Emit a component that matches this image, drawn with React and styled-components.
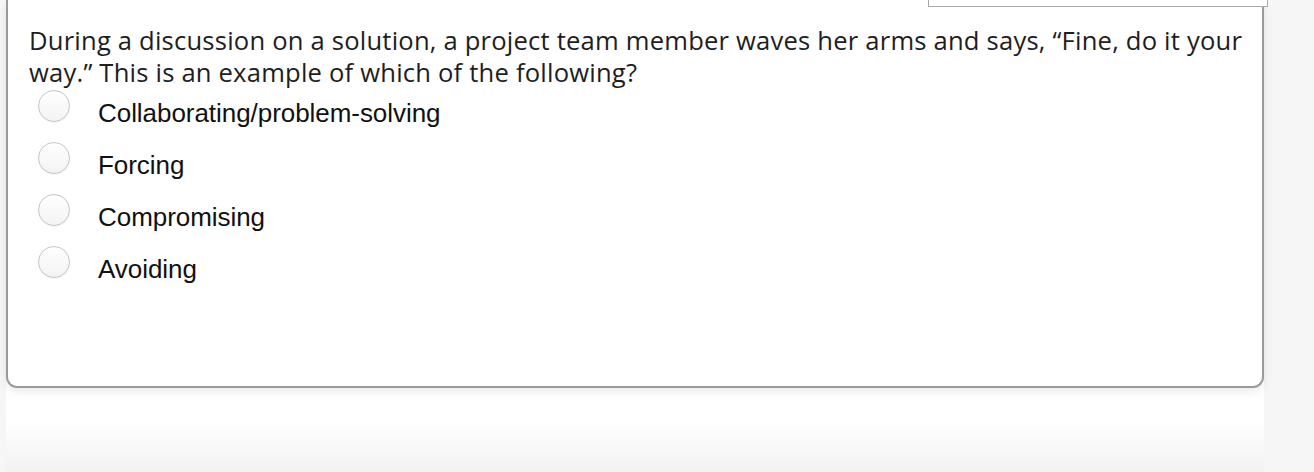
import React from "react";
import styled, { createGlobalStyle } from "styled-components";

const Global = createGlobalStyle`
  html, body { margin: 0; padding: 0; }
  body { background: #f6f6f6; width: 1314px; height: 472px; overflow: hidden; }
`;

const Column = styled.div`
  margin-left: 6px;
  width: 1258px;
  height: 472px;
  background: linear-gradient(to bottom, #ffffff 0px, #ffffff 420px, #f2f2f2 472px);
  position: relative;
`;

const Card = styled.div`
  position: relative;
  box-sizing: border-box;
  height: 388px;
  background: #fff;
  border: 2px solid #9a9a9a;
  border-top: none;
  border-radius: 0 0 11px 11px;
  box-shadow: 0 4px 10px rgba(0, 0, 0, 0.08);
  padding: 25px 0 0 21px;
`;

const TopBox = styled.div`
  position: absolute;
  top: -2px;
  left: 920px;
  width: 340px;
  height: 9px;
  box-sizing: border-box;
  border: 1px solid #aaa;
  border-top: none;
  background: #fff;
`;

const Question = styled.div`
  font-family: "Open Sans", sans-serif;
  font-size: 25.6px;
  line-height: 32px;
  letter-spacing: 0.2px;
  color: #1e1e1e;
  width: 1230px;
`;

const Options = styled.div`
  display: flex;
  flex-direction: column;
`;

const Option = styled.label`
  display: flex;
  align-items: flex-start;
  height: 52px;
  padding-left: 9px;
`;

const Radio = styled.span`
  width: 32px;
  height: 32px;
  margin-top: 1px;
  box-sizing: border-box;
  border-radius: 50%;
  border: 1px solid #c6c6c6;
  background: linear-gradient(to bottom, #ffffff, #f3f3f3);
  box-shadow: 0 1px 1px rgba(0, 0, 0, 0.05);
  flex: none;
`;

const OptionText = styled.span`
  font-family: "Liberation Sans", Arial, sans-serif;
  font-size: 26px;
  line-height: 30px;
  color: #111;
  margin-left: 28px;
  margin-top: 9px;
  letter-spacing: -0.05px;
`;

const options = [
  "Collaborating/problem-solving",
  "Forcing",
  "Compromising",
  "Avoiding",
];

export default function App() {
  return (
    <>
      <Global />
      <Column>
        <Card>
          <TopBox />
          <Question>
            During a discussion on a solution, a project team member waves her arms and says, “Fine, do it your way.” This is an example of which of the following?
          </Question>
          <Options>
            {options.map((o) => (
              <Option key={o}>
                <Radio />
                <OptionText>{o}</OptionText>
              </Option>
            ))}
          </Options>
        </Card>
      </Column>
    </>
  );
}
